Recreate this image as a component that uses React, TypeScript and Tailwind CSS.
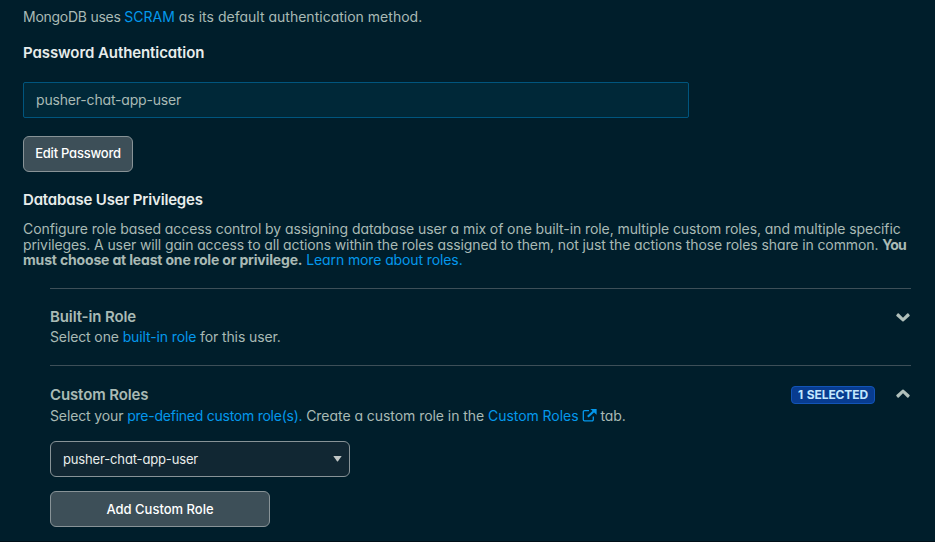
import type { ReactNode } from 'react';

function Link({ children, className = '' }: { children: ReactNode; className?: string }) {
  return <a className={`text-[#0498ec] ${className}`}>{children}</a>;
}

function Chevron({ up = false }: { up?: boolean }) {
  return (
    <svg width="16" height="16" viewBox="0 0 16 16" fill="#b0c0bb" className={up ? 'rotate-180' : ''}>
      <path d="M1.4 5.9 L2.6 4.6 Q3.2 4.1 3.8 4.6 L8 8.7 L12.2 4.6 Q12.8 4.1 13.4 4.6 L14.6 5.9 Q15 6.4 14.6 6.9 L8.7 12.2 Q8 12.8 7.3 12.2 L1.4 6.9 Q1 6.4 1.4 5.9Z" />
    </svg>
  );
}

function ExternalIcon() {
  return (
    <svg width="15" height="13" viewBox="0 0 15 13" fill="none" className="ml-[3px] inline-block align-[-1px]">
      <path d="M7 1.7H2.5a1.2 1.2 0 0 0-1.2 1.2v7.7a1.2 1.2 0 0 0 1.2 1.2h7.6a1.2 1.2 0 0 0 1.2-1.2V7.5" stroke="#0498ec" strokeWidth="1.3" />
      <path d="M5.8 7.7 L12 2" stroke="#0498ec" strokeWidth="2.2" />
      <path d="M8.4 0h6.2v5.8z" fill="#0498ec" />
    </svg>
  );
}

export default function App() {
  return (
    <main className="flex h-[542px] w-[935px] flex-col overflow-hidden border-b border-[#000f18] bg-[#001e2b] pl-[23px] pr-6 font-['Inter',sans-serif] text-[14px] whitespace-nowrap text-[#a9bab5] [font-feature-settings:'cv11']">
      <p className="mt-[7px] h-5 leading-5">
        <span className="tracking-[-0.26px]">MongoDB uses </span><Link>SCRAM</Link><span className="tracking-[0.01px]"> as its default authentication method.</span>
      </p>
      <h2 className="mt-4 h-5 text-[15px] leading-5 font-semibold tracking-[-0.08px] text-[#e8edeb]">Password Authentication</h2>
      <div className="mt-[19px] flex h-9 w-[666px] items-center rounded-[2px] border border-[#00557e] bg-[#002838] px-3 pb-px tracking-[-0.18px]">
        pusher-chat-app-user
      </div>
      <button className="mt-[18px] flex h-9 w-[110px] items-center justify-center rounded-md border border-[#889397] bg-[#3d4f58] text-[13px] font-medium tracking-[-0.22px] text-white">
        Edit Password
      </button>
      <h2 className="mt-[18px] h-5 text-[15px] leading-5 font-semibold tracking-[-0.17px] text-[#e8edeb]">Database User Privileges</h2>
      <p className="mt-[11px] h-[47px] leading-[15.5px]">
        <span className="block tracking-[-0.082px]">Configure role based access control by assigning database user a mix of one built-in role, multiple custom roles, and multiple specific</span>
        <span className="block tracking-[-0.11px]">privileges. A user will gain access to all actions within the roles assigned to them, not just the actions those roles share in common. <b className="tracking-[-0.7px]">You</b></span>
        <span className="block tracking-[-0.11px]"><b className="tracking-[-0.165px]">must choose at least one role or privilege.</b> <Link>Learn more about roles.</Link></span>
      </p>
      <div className="mt-5 ml-[27px]">
        <section className="flex h-[77px] justify-between border-t border-[#3d4f58]">
          <div className="pt-[18px]">
            <h3 className="h-5 text-[15px] leading-5 font-semibold tracking-[-0.12px]">Built-in Role</h3>
            <p className="h-5 leading-5 tracking-[-0.12px]">Select one <Link>built-in role</Link> for this user.</p>
          </div>
          <div className="pt-5"><Chevron /></div>
        </section>
        <section className="border-t border-[#3d4f58] pt-[19px]">
          <div className="flex h-[41px] justify-between">
            <div>
              <h3 className="h-5 text-[15px] leading-5 font-semibold tracking-[-0.12px]">Custom Roles</h3>
              <p className="mt-px h-5 leading-5 tracking-[-0.05px]">
                <span className="tracking-[-0.12px]">Select your </span><Link className="tracking-[-0.25px]">pre-defined custom role(s).</Link> Create a custom role in the <Link>Custom Roles<ExternalIcon /></Link> tab.
              </p>
            </div>
            <div className="flex items-start gap-5 pt-px">
              <span className="flex h-[18px] w-[84px] items-center justify-center rounded border border-[#1254b7] bg-[#083c90] text-[12px] font-bold tracking-[-0.1px] text-[#c3e7fe] [word-spacing:1px]">1 SELECTED</span>
              <Chevron up />
            </div>
          </div>
          <div className="mt-[15px] flex h-9 w-[300px] items-center justify-between rounded-md border border-[#889397] bg-[#112733] pr-[7px] pl-3 text-[13px] tracking-[-0.15px] text-[#e8edeb]">
            <span className="pt-[2px]">pusher-chat-app-user</span>
            <svg width="9" height="6" viewBox="0 0 9 6"><path d="M.3 0h8.4L5 5.2q-.5.6-1 0z" fill="#c1c7c6" /></svg>
          </div>
          <button className="mt-[14px] flex h-9 w-[220px] items-center justify-center rounded-md border border-[#889397] bg-[#3d4f58] pt-[2px] text-[13px] font-medium text-white">
            Add Custom Role
          </button>
        </section>
      </div>
    </main>
  );
}
